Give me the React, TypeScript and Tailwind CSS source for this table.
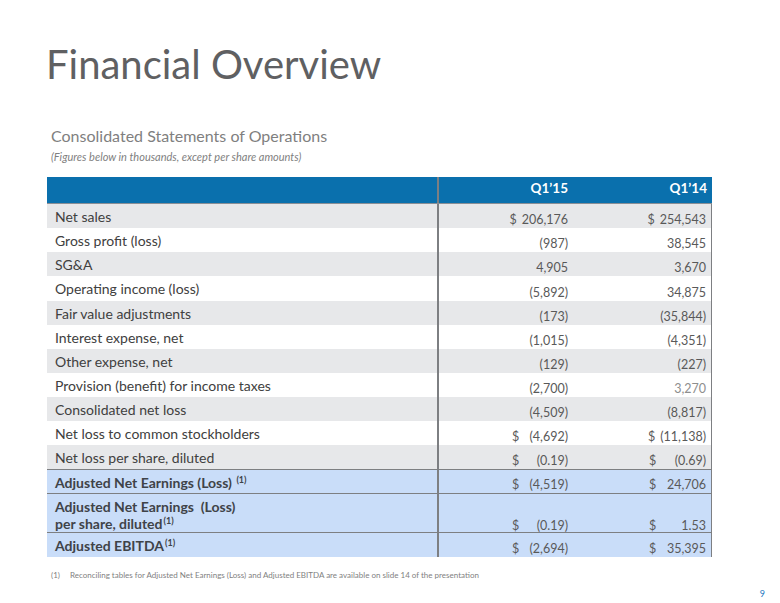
import React from 'react';

type Row = {
  label: React.ReactNode;
  a: string;
  b: string;
  aDollar?: boolean;
  bDollar?: boolean;
  bg: 'gray' | 'white' | 'blue';
  h: string;
  bLight?: boolean;
};

const Sup = () => <span className="text-[9px] font-bold ml-[1px] relative -top-[5px]">(1)</span>;

const ROWS: Row[] = [
  { label: 'Net sales', a: '206,176', b: '254,543', aDollar: true, bDollar: true, bg: 'gray', h: 'h-[24px]' },
  { label: 'Gross profit (loss)', a: '(987)', b: '38,545', bg: 'white', h: 'h-[24px]' },
  { label: 'SG&A', a: '4,905', b: '3,670', bg: 'gray', h: 'h-[24px]' },
  { label: 'Operating income (loss)', a: '(5,892)', b: '34,875', bg: 'white', h: 'h-[25px]' },
  { label: 'Fair value adjustments', a: '(173)', b: '(35,844)', bg: 'gray', h: 'h-[24px]' },
  { label: 'Interest expense, net', a: '(1,015)', b: '(4,351)', bg: 'white', h: 'h-[24px]' },
  { label: 'Other expense, net', a: '(129)', b: '(227)', bg: 'gray', h: 'h-[24px]' },
  { label: 'Provision (benefit) for income taxes', a: '(2,700)', b: '3,270', bg: 'white', bLight: true, h: 'h-[24px]' },
  { label: 'Consolidated net loss', a: '(4,509)', b: '(8,817)', bg: 'gray', h: 'h-[24px]' },
  { label: 'Net loss to common stockholders', a: '(4,692)', b: '(11,138)', aDollar: true, bDollar: true, bg: 'white', h: 'h-[24px]' },
  { label: 'Net loss per share, diluted', a: '(0.19)', b: '(0.69)', aDollar: true, bDollar: true, bg: 'gray', h: 'h-[24px]' },
  {
    label: (
      <>
        Adjusted Net Earnings (Loss) <Sup />
      </>
    ),
    a: '(4,519)',
    b: '24,706',
    aDollar: true,
    bDollar: true,
    bg: 'blue',
    h: 'h-[24px]',
  },
  {
    label: (
      <>
        Adjusted Net Earnings&nbsp; (Loss)
        <br />
        per share, diluted
        <Sup />
      </>
    ),
    a: '(0.19)',
    b: '1.53',
    aDollar: true,
    bDollar: true,
    bg: 'blue',
    h: 'h-[39px]',
  },
  {
    label: (
      <>
        Adjusted EBITDA
        <Sup />
      </>
    ),
    a: '(2,694)',
    b: '35,395',
    aDollar: true,
    bDollar: true,
    bg: 'blue',
    h: 'h-[25px]',
  },
];

const bgClass = {
  gray: 'bg-[#e7e8ea]',
  white: 'bg-white',
  blue: 'bg-[#c9ddf9] border-t-[1.5px] border-[#5a5f66]',
};

const Value = ({ v, dollar, width, light }: { v: string; dollar?: boolean; width: string; light?: boolean }) =>
  dollar ? (
    <div className={`flex justify-between gap-[5px] ${width}`}>
      <span>$</span>
      <span>{v}</span>
    </div>
  ) : (
    <span className={light ? 'text-[#8e8e8e]' : ''}>{v}</span>
  );

export default function App() {
  return (
    <div className="w-[780px] h-[603px] bg-white flex flex-col text-[#404040]" style={{ fontFamily: 'Lato, "Open Sans", sans-serif' }}>
      <h1 className="pl-[46px] pt-[40px] text-[40px] leading-[48px] text-[#5f6062]">Financial Overview</h1>

      <div className="pl-[51px] mt-[38px] text-[16px] leading-[20px] text-[#7f7f7f]">Consolidated Statements of Operations</div>
      <div className="pl-[51px] mt-[4px] text-[11px] leading-[14px] italic text-[#7f7f7f]">
        (Figures below in thousands, except per share amounts)
      </div>

      <div className="ml-[47px] mt-[13px] w-[665px] flex flex-col">
        <div className="grid grid-cols-[390px_138px_1fr] h-[27px] bg-[#0a70ad] text-white font-bold text-[13.5px] border-b border-[#8a8f96]">
          <div />
          <div className="border-l-2 border-[#7d7f82] flex items-end justify-end pr-[7px] pb-[5px]">Q1’15</div>
          <div className="flex items-end justify-end pr-[5px] pb-[5px]">Q1’14</div>
        </div>
        {ROWS.map((r, i) => (
          <div key={i} className={`grid grid-cols-[390px_138px_1fr] ${r.h} ${bgClass[r.bg]} border-r border-[#7d7f82]`}>
            <div className={`pl-[8px] pt-[4px] text-[14px] leading-[17px] ${r.bg === 'blue' ? 'font-bold text-[#3f4348]' : ''}`}>
              {r.label}
            </div>
            <div className="border-l-2 border-[#7d7f82] flex items-end justify-end pr-[7px] text-[12.5px] leading-[17px] text-[#595959]">
              <Value v={r.a} dollar={r.aDollar} width="min-w-[56px]" />
            </div>
            <div className="flex items-end justify-end pr-[5px] text-[12.5px] leading-[17px] text-[#595959]">
              <Value v={r.b} dollar={r.bDollar} width="min-w-[57px]" light={r.bLight} />
            </div>
          </div>
        ))}
      </div>

      <div className="pl-[51px] mt-[13px] flex gap-[10px] text-[8px] leading-[10px] text-[#7f7f7f]">
        <span>(1)</span>
        <span>Reconciling tables for Adjusted Net Earnings (Loss) and Adjusted EBITDA are available on slide 14 of the presentation</span>
      </div>
      <div className="flex justify-end pr-[15px] mt-[7px] text-[9px] text-[#1f78c1]">9</div>
    </div>
  );
}
